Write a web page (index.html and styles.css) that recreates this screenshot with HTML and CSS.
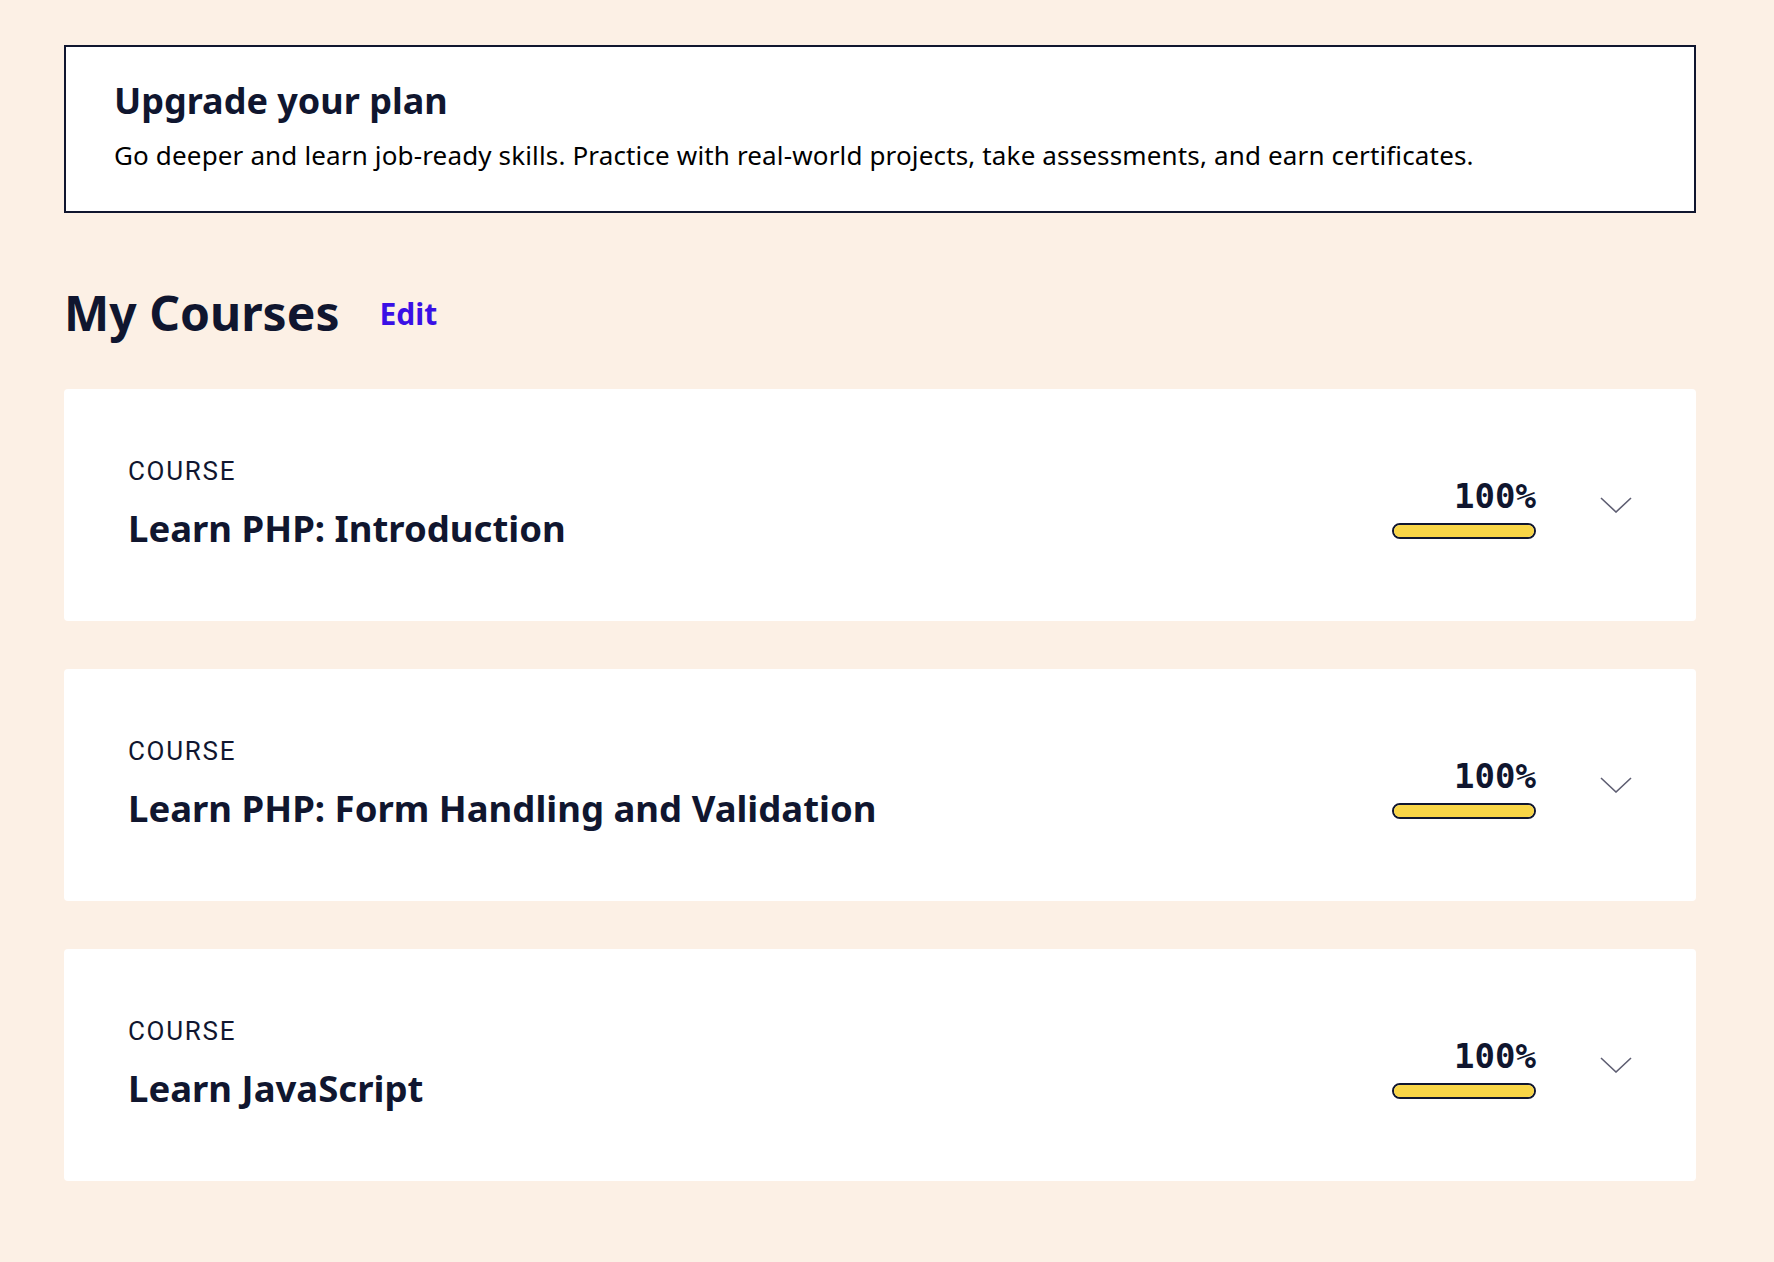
FILE: index.html
```html
<!DOCTYPE html>
<html lang="en">
<head>
<meta charset="utf-8">
<title>My Courses</title>
<link rel="stylesheet" href="styles.css">
</head>
<body>
<main class="page">
  <section class="upgrade">
    <h2 class="upgrade-title">Upgrade your plan</h2>
    <p class="upgrade-text">Go deeper and learn job-ready skills. Practice with real-world projects, take assessments, and earn certificates.</p>
  </section>

  <div class="courses-head">
    <h1 class="courses-title">My Courses</h1>
    <a class="edit-link" href="#">Edit</a>
  </div>

  <ul class="course-list">
    <li class="card">
      <div class="card-info">
        <div class="card-kind">COURSE</div>
        <div class="card-name">Learn PHP: Introduction</div>
      </div>
      <div class="progress">
        <div class="progress-value">100%</div>
        <div class="progress-bar"><div class="progress-fill" style="width:100%"></div></div>
      </div>
      <svg class="chevron" width="32" height="16" viewBox="0 0 32 16"><path d="M1 1 L16 15 L31 1" fill="none" stroke="#5e5e72" stroke-width="1.6"/></svg>
    </li>
    <li class="card">
      <div class="card-info">
        <div class="card-kind">COURSE</div>
        <div class="card-name">Learn PHP: Form Handling and Validation</div>
      </div>
      <div class="progress">
        <div class="progress-value">100%</div>
        <div class="progress-bar"><div class="progress-fill" style="width:100%"></div></div>
      </div>
      <svg class="chevron" width="32" height="16" viewBox="0 0 32 16"><path d="M1 1 L16 15 L31 1" fill="none" stroke="#5e5e72" stroke-width="1.6"/></svg>
    </li>
    <li class="card">
      <div class="card-info">
        <div class="card-kind">COURSE</div>
        <div class="card-name">Learn JavaScript</div>
      </div>
      <div class="progress">
        <div class="progress-value">100%</div>
        <div class="progress-bar"><div class="progress-fill" style="width:100%"></div></div>
      </div>
      <svg class="chevron" width="32" height="16" viewBox="0 0 32 16"><path d="M1 1 L16 15 L31 1" fill="none" stroke="#5e5e72" stroke-width="1.6"/></svg>
    </li>
  </ul>
</main>
</body>
</html>
```

FILE: styles.css
```css
html, body {
  margin: 0;
  padding: 0;
}
body {
  background: #fcf0e5;
  color: #10162f;
  font-family: "Noto Sans", "Liberation Sans", sans-serif;
  min-height: 1262px;
}
.page {
  width: 1632px;
  padding: 45px 0 0 64px;
}
.upgrade {
  background: #fff;
  border: 2px solid #10162f;
  padding: 32px 48px 40px;
}
.upgrade-title {
  margin: 0;
  font-size: 36px;
  line-height: 44px;
  font-weight: 700;
}
.upgrade-text {
  margin: 16px 0 0;
  font-size: 26px;
  line-height: 32px;
  letter-spacing: 0.15px;
  color: #000;
}
.courses-head {
  display: flex;
  align-items: center;
  gap: 40px;
  margin: 70px 0 46px;
}
.courses-title {
  margin: 0;
  font-size: 48px;
  line-height: 60px;
  font-weight: 700;
}
.edit-link {
  color: #3a10e5;
  font-size: 30px;
  font-weight: 700;
  text-decoration: none;
}
.course-list {
  list-style: none;
  margin: 0;
  padding: 0;
  display: flex;
  flex-direction: column;
  gap: 48px;
}
.card {
  background: #fff;
  border-radius: 4px;
  height: 232px;
  box-sizing: border-box;
  padding: 0 64px;
  display: flex;
  align-items: center;
}
.card-info {
  flex: 1;
  margin-bottom: 5px;
}
.card-kind {
  font-family: Roboto, "Liberation Sans", sans-serif;
  font-size: 26px;
  line-height: 32px;
  letter-spacing: 1.7px;
}
.card-name {
  margin-top: 19px;
  font-size: 36.5px;
  line-height: 44px;
  font-weight: 700;
}
.progress {
  width: 144px;
  margin-top: 6px;
}
.progress-value {
  font-family: "DejaVu Sans Mono", "Liberation Mono", monospace;
  font-weight: 700;
  font-size: 34px;
  line-height: 36px;
  text-align: right;
}
.progress-bar {
  margin-top: 9px;
  height: 16px;
  box-sizing: border-box;
  border: 2px solid #10162f;
  border-radius: 8px;
  overflow: hidden;
  background: #fff;
}
.progress-fill {
  height: 100%;
  background: #f8d547;
}
.chevron {
  margin-left: 64px;
  display: block;
}
```
